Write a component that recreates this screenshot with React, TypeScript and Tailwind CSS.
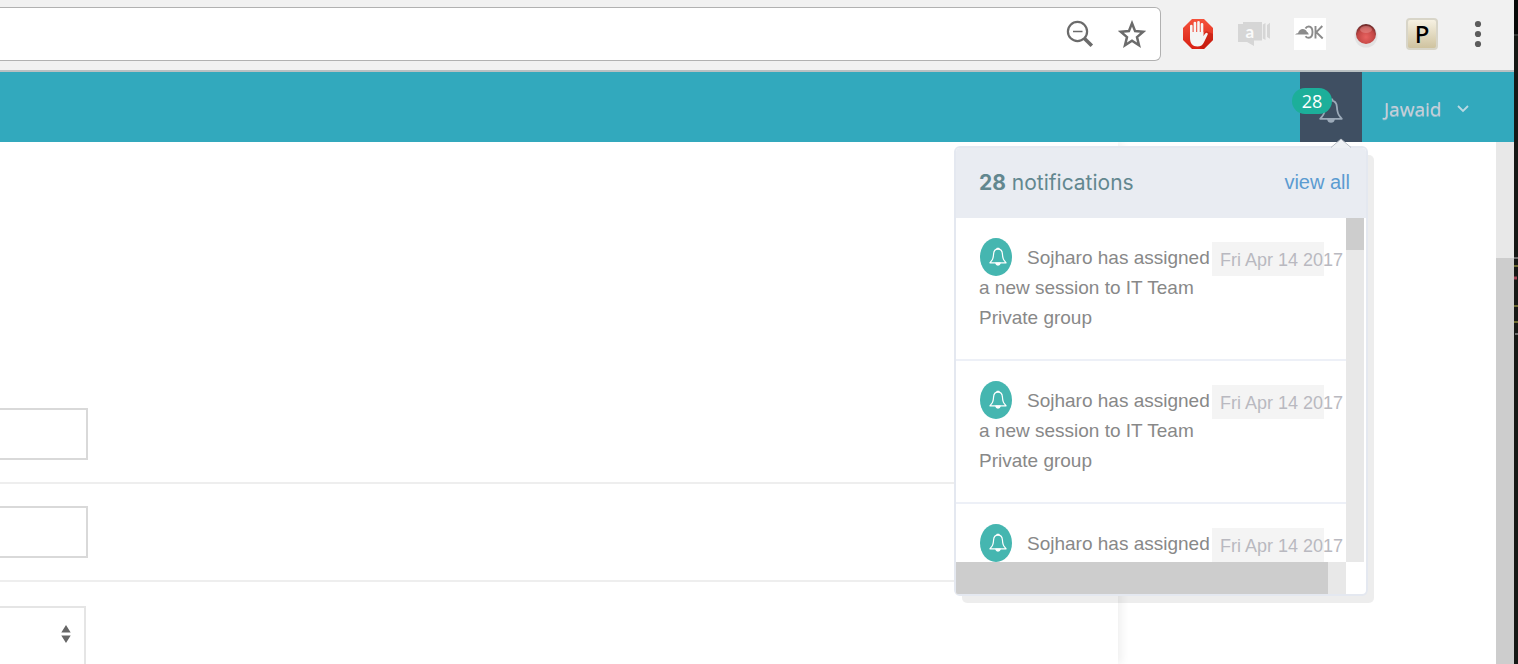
import React from "react";

const sans = "font-['Liberation_Sans',sans-serif]";

function Bell({ className, width = 1.4 }: { className: string; width?: number }) {
  return (
    <svg viewBox="0 0 24 26" className={className} fill="none" stroke="currentColor" strokeWidth={width} strokeLinejoin="round" aria-hidden="true">
      <path d="M10.6 2.6V1.4h2.8v1.2" />
      <path d="M12 2.600c-4 0-5.700 2.900-5.900 6.400-.3 5-.9 7.400-3.100 9.600L1.200 20.800h21.600L21 18.600c-2.200-2.200-2.800-4.600-3.100-9.600-.2-3.500-1.900-6.400-5.900-6.400z" />
      <path d="M9 21c.3 1.900 1.400 2.800 3 2.800s2.700-.9 3-2.800z" fill="currentColor" />
    </svg>
  );
}

function BrowserBar() {
  return (
    <div className="flex h-[72px] shrink-0 items-start border-b-2 border-[#b9c0c2] bg-[#f1f1f1] pt-[7px]">
      <div className="flex h-[54px] min-w-0 flex-1 items-center gap-6 rounded-r-md border border-l-0 border-[#b1b1b1] bg-white pr-[14px]">
        <input aria-label="Address" className="h-full min-w-0 flex-1 bg-transparent outline-none" />
        <button aria-label="Zoom out">
          <svg viewBox="0 0 28 28" className="size-7" fill="none" stroke="#6b6b6b" aria-hidden="true">
            <circle cx="11.500" cy="11.500" r="9.600" strokeWidth="2.200" />
            <path d="M7 11.500h9.500" strokeWidth="1.500" />
            <path d="M18.200 18.200l7.600 7.600" strokeWidth="3.600" />
          </svg>
        </button>
        <button aria-label="Bookmark">
          <svg viewBox="0 0 28 28" className="size-7" fill="none" stroke="#6b6b6b" strokeWidth="2.500" aria-hidden="true">
            <path d="M14 3.300l3.100 7.800 8.200.6-6.300 5.400 2 8.100-7-4.400-7 4.400 2-8.100-6.300-5.400 8.200-.6z" />
          </svg>
        </button>
      </div>
      <div className="flex h-[54px] w-[353px] shrink-0 items-center gap-6 pl-[21px]">
        <button aria-label="Ad blocker">
          <svg viewBox="0 0 32 32" className="size-8" aria-hidden="true">
            <defs>
              <linearGradient id="stop" x1="0" y1="0" x2="0" y2="1">
                <stop offset="0" stopColor="#f5523c" />
                <stop offset="1" stopColor="#d81f12" />
              </linearGradient>
            </defs>
            <path d="M10 1h12l9 9v12l-9 9H10l-9-9V10z" fill="url(#stop)" />
            <path d="M14 28l8 3 9-9v-6l-7-3z" fill="#b31409" opacity=".45" />
            <path d="M9.300 17V8M12.900 16V5M16.500 16V4.200M20 17V6.200" stroke="#f7f7f7" strokeWidth="2.600" strokeLinecap="round" />
            <path d="M8 14h13.300v4l2-2.600c1-1.200 3-.4 2.400 1.200l-3.600 7.400c-1.300 3-3.400 4.600-6.600 4.600-5 0-7.500-3.500-7.500-8.500z" fill="#f4f4f4" />
          </svg>
        </button>
        <button aria-label="Video chat">
          <svg viewBox="0 0 32 32" className="size-8" fill="#d6d6d6" aria-hidden="true">
            <path d="M0 6h5V4h19v18.500h-8v5.500L9 24H0z" />
            <path d="M24.800 6.500L27.500 5v17l-2.700-1.500zM29 7l3-2.200v16L29 19z" />
            <text x="7.500" y="20" fontSize="17" fontWeight="700" fontFamily="Lato, sans-serif" fill="#fafafa">a</text>
          </svg>
        </button>
        <button aria-label="OK extension" className="bg-white">
          <svg viewBox="0 0 32 32" className="size-8" aria-hidden="true">
            <path d="M1 16.500c1-1 2-1.200 3-1.300 1.500-5 7-5.400 9-1.200 1 .3 1.500 1.300 1.800 2.500H1z" fill="#8b8b8b" />
            <path d="M11.500 10.500C12.300 9 13.500 8.500 14.700 8.500c2.600 0 3.800 2.400 3.800 5.600s-1.200 5.700-3.800 5.700c-1.400 0-2.400-.5-3.200-1.600M21.500 8v12.500M28.300 8l-6 6.200 6.400 6.300" fill="none" stroke="#8b8b8b" strokeWidth="1.900" />
          </svg>
        </button>
        <button aria-label="Record">
          <svg viewBox="0 0 32 32" className="size-8" aria-hidden="true">
            <defs>
              <radialGradient id="record" cx=".5" cy=".65" r=".65">
                <stop offset="0" stopColor="#e86260" />
                <stop offset=".65" stopColor="#c24644" />
                <stop offset="1" stopColor="#5f2525" />
              </radialGradient>
            </defs>
            <ellipse cx="16" cy="18" rx="11.500" ry="11.500" fill="#d9d9d9" opacity=".6" />
            <circle cx="16" cy="16" r="10" fill="url(#record)" />
            <ellipse cx="16" cy="11.500" rx="6" ry="3.500" fill="#f0a5a2" opacity=".4" />
          </svg>
        </button>
        <button aria-label="P extension" className="size-8 rounded-sm border-2 border-[#d8d5c8] bg-linear-to-b from-[#f6f1e2] to-[#cfc39f] font-['Noto_Sans',sans-serif] text-2xl/6 font-medium text-black">
          P
        </button>
        <button aria-label="Browser menu">
          <svg viewBox="0 0 32 32" className="size-8" fill="#5c5c5c" aria-hidden="true">
            <circle cx="16" cy="6" r="3.100" />
            <circle cx="16" cy="16" r="3.100" />
            <circle cx="16" cy="26" r="3.100" />
          </svg>
        </button>
      </div>
    </div>
  );
}

function Notification() {
  return (
    <li className="flex items-start border-b-2 border-[#edf0f7] pt-6 pb-[26px] pl-[23px]">
      <p className="w-[233px] shrink-0 pt-px text-[19px]/[30px] text-[#888888]">
        <span className="-mt-[10px] mr-[15px] -mb-[6px] ml-px inline-flex h-[38px] w-8 items-center justify-center rounded-[50%] bg-[#45b6b0] pl-1 align-middle text-white">
          <Bell className="h-5 w-[18px]" width={1.600} />
        </span>
        Sojharo has assigned a new session to IT Team Private group
      </p>
      <time className="h-[34px] w-28 shrink-0 bg-[#f4f4f4] pl-2 text-lg/9 whitespace-nowrap text-[#b9b9c0]">Fri Apr 14 2017</time>
    </li>
  );
}

function NotificationPanel() {
  return (
    <section aria-label="Notifications" className={`absolute top-[74px] -right-[6px] z-10 w-[414px] rounded-md border-2 border-[#e4e8f0] bg-white shadow-[7px_8px_0_-1px_rgba(0,0,0,0.07)] ${sans}`}>
      <svg viewBox="0 0 22 10" className="absolute -top-[10px] right-[14px] h-[10px] w-[22px]" aria-hidden="true">
        <path d="M1 10L11 1l10 9z" fill="#edf0f4" />
        <path d="M1 9.500L11 1l10 8.500" fill="none" stroke="#b9bec6" strokeWidth="1" />
      </svg>
      <header className="flex h-[70px] items-center justify-between rounded-t bg-[#e9ecf2] pr-4 pl-[23px]">
        <h2 className="font-['Inter',sans-serif] text-[21px] text-[#62878f]">
          <strong className="font-bold">28</strong> notifications
        </h2>
        <a href="#all" className="pb-[2px] text-xl text-[#5b9bd1]">view all</a>
      </header>
      <div className="flex pr-[2px]">
        <ul className="h-[344px] min-w-0 flex-1 overflow-hidden">
          <Notification />
          <Notification />
          <Notification />
        </ul>
        <div className="w-[18px] bg-[#e8e8e8]">
          <div className="h-8 bg-[#cdcdcd]" />
        </div>
      </div>
      <div className="mr-5 h-8 bg-[#e8e8e8] pr-[18px]">
        <div className="h-full rounded-bl-xs bg-[#cdcdcd]" />
      </div>
    </section>
  );
}

function TopBar() {
  return (
    <nav className="flex h-[70px] shrink-0 justify-end bg-[#32a9bd] font-['Open_Sans',sans-serif]">
      <div className="relative">
        <button aria-label="28 notifications" className="relative flex h-full w-[62px] items-center justify-center bg-[#3f4f62]">
          <Bell className="mt-2 h-7 w-6 text-[#9caab9]" width={1.800} />
          <span className="absolute top-4 -left-2 flex h-[26px] w-10 items-center justify-center rounded-full bg-[#1caf9a] text-lg text-white">28</span>
        </button>
        <NotificationPanel />
      </div>
      <button className="flex w-[152px] items-center gap-4 pt-1 pl-[22px] text-[19px] text-[#c6cfda] [text-shadow:0_1px_0_rgba(198,207,218,0.6)]">
        Jawaid
        <svg viewBox="0 0 12 8" className="h-2 w-3" fill="none" stroke="#b9d9e3" strokeWidth="1.800" aria-hidden="true">
          <path d="M1 1l5 5 5-5" />
        </svg>
      </button>
    </nav>
  );
}

function FormPage() {
  return (
    <div className="flex min-h-0 flex-1 bg-white">
      <main className="min-w-0 flex-1 overflow-hidden pr-[378px]">
        <form className="h-full bg-white pt-[244px] shadow-[4px_0_8px_rgba(0,0,0,0.06)]">
          <div className="border-b-2 border-[#eeeeee] py-[22px]">
            <input aria-label="First field" className="block h-[52px] w-[88px] border-2 border-l-0 border-[#d9d9d9] bg-white" />
          </div>
          <div className="border-b-2 border-[#eeeeee] py-[22px]">
            <input aria-label="Second field" className="block h-[52px] w-[88px] border-2 border-l-0 border-[#d9d9d9] bg-white" />
          </div>
          <div className="pt-6">
            <div className="relative w-[86px]">
              <select aria-label="Option" className="block h-[68px] w-full appearance-none border-2 border-l-0 border-[#e5e5e5] bg-white" />
              <svg viewBox="0 0 10 18" className="pointer-events-none absolute top-[19px] right-[15px] h-[18px] w-[10px]" fill="#666666" aria-hidden="true">
                <path d="M5 0l4.700 7.500H.3zM5 18L.3 10.500h9.400z" />
              </svg>
            </div>
          </div>
        </form>
      </main>
      <div className="flex w-[18px] shrink-0 flex-col bg-[#e8e8e8] pt-[116px]">
        <div className="flex-1 bg-[#cdcdcd]" />
      </div>
    </div>
  );
}

export default function App() {
  return (
    <div className="flex h-screen overflow-hidden bg-[#1a1c19]">
      <div className="flex min-w-0 flex-1 flex-col">
        <BrowserBar />
        <TopBar />
        <FormPage />
      </div>
      <div className="w-1 shrink-0 bg-[#161815]">
        <div className="h-9 border-b-2 border-[#333634] bg-[#080908]" />
        <svg viewBox="0 0 4 90" className="mt-[220px] h-[90px] w-1" aria-hidden="true">
          <path d="M0 2h4M1 78h3" stroke="#6b6b6b" strokeWidth="2" />
          <path d="M0 10h4M0 50h4M0 66h4" stroke="#6d6a32" strokeWidth="2" />
          <path d="M0 22h3" stroke="#a04455" strokeWidth="3" />
        </svg>
      </div>
    </div>
  );
}
